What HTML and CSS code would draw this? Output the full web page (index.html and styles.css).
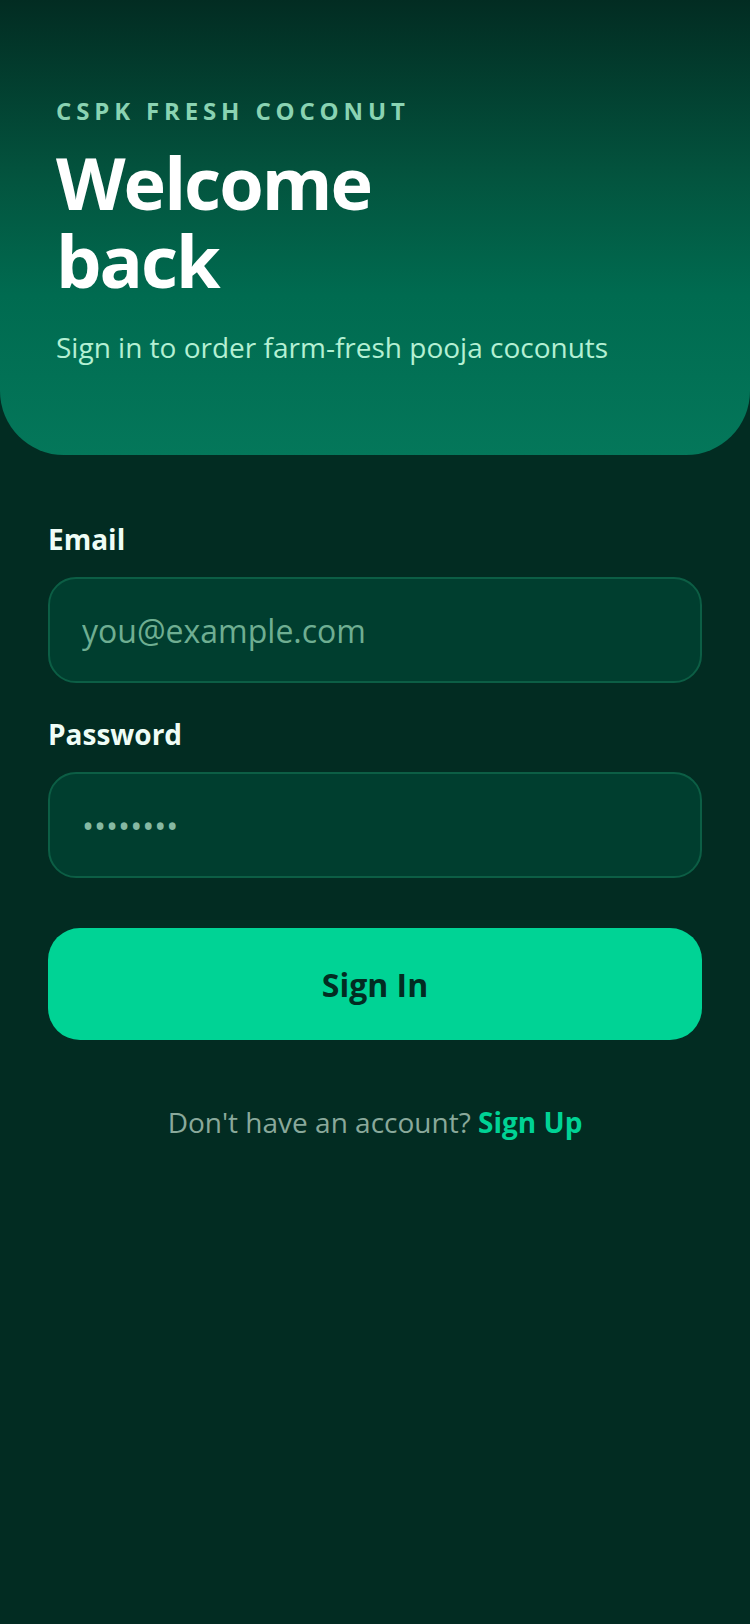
FILE: index.html
```html
<!DOCTYPE html>
<html lang="en">
<head>
<meta charset="utf-8">
<title>CSPK Fresh Coconut – Sign in</title>
<link rel="stylesheet" href="styles.css">
</head>
<body>
<div class="screen">
  <header class="hero">
    <div class="brand">CSPK FRESH COCONUT</div>
    <h1 class="title"><span class="title-line">Welcome</span><span class="title-line">back</span></h1>
    <p class="subtitle">Sign in to order farm-fresh pooja coconuts</p>
  </header>
  <form class="form">
    <div class="field">
      <label class="label" for="email">Email</label>
      <input class="input" id="email" type="email" placeholder="you@example.com">
    </div>
    <div class="field">
      <label class="label" for="password">Password</label>
      <input class="input input-pass" id="password" type="password" placeholder="••••••••">
    </div>
    <button class="btn" type="button">Sign In</button>
    <p class="switch">Don't have an account? <a class="switch-link" href="#">Sign Up</a></p>
  </form>
</div>
</body>
</html>
```
FILE: styles.css
```css
* { box-sizing: border-box; }
html, body {
  margin: 0;
  padding: 0;
  background: #022c22;
}
body {
  font-family: "Open Sans", "Noto Sans", sans-serif;
  color: #ecfdf5;
  width: 750px;
  min-height: 1624px;
}
.screen {
  display: flex;
  flex-direction: column;
  min-height: 1624px;
}
.hero {
  background: linear-gradient(180deg, #022c22 0%, #03553f 40%, #006b50 65%, #04775a 100%);
  border-radius: 0 0 64px 64px;
  padding: 95px 56px 88px;
  display: flex;
  flex-direction: column;
}
.brand {
  font-size: 24px;
  line-height: 32px;
  font-weight: 700;
  letter-spacing: 4.85px;
  color: #8ad3b2;
}
.title {
  margin: 16px 0 0;
  display: flex;
  flex-direction: column;
  font-size: 72px;
  line-height: 78px;
  font-weight: 700;
  letter-spacing: -2px;
  color: #ffffff;
}
.title-line { display: block; }
.subtitle {
  margin: 28px 0 0;
  font-size: 28px;
  line-height: 40px;
  font-weight: 400;
  color: #b4f0d3;
}
.form {
  padding: 66px 48px 0;
  display: flex;
  flex-direction: column;
}
.field {
  display: flex;
  flex-direction: column;
  gap: 20px;
  margin-bottom: 33px;
}
.field + .field { margin-bottom: 50px; }
.label {
  font-size: 28px;
  line-height: 36px;
  font-weight: 700;
  color: #effdf6;
}
.input {
  height: 106px;
  border: 2px solid #0c5e45;
  border-radius: 28px;
  background: #003e2f;
  padding: 0 32px;
  font-family: "Open Sans", "Noto Sans", sans-serif;
  font-size: 32px;
  color: #ecfdf5;
  outline: none;
}
.input::placeholder {
  color: #6fae92;
  opacity: 1;
}
.input-pass::placeholder {
  color: #86b9a3;
}
.btn {
  height: 112px;
  border: 0;
  border-radius: 32px;
  background: #00d395;
  color: #022c22;
  font-family: "Open Sans", "Noto Sans", sans-serif;
  font-size: 32px;
  font-weight: 700;
}
.switch {
  margin: 64px 0 0;
  text-align: center;
  font-size: 28px;
  line-height: 36px;
  color: #8aa99b;
}
.switch-link {
  color: #00d395;
  font-weight: 700;
  text-decoration: none;
}
```
